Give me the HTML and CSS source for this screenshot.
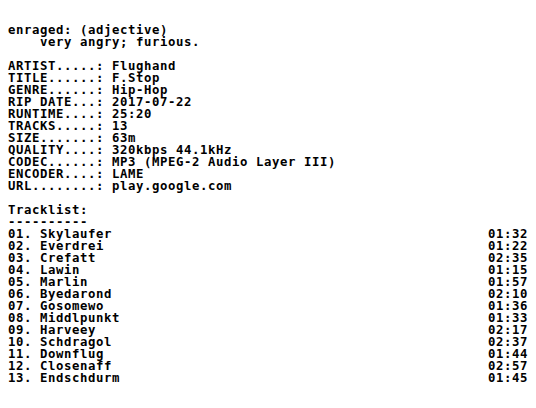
FILE: index.html
```html
<!DOCTYPE html>
<html>
<head>
<meta charset="utf-8">
<link rel="stylesheet" href="styles.css">
</head>
<body>
<pre class="nfo">enraged: (adjective)
    very angry; furious.

ARTIST.....: Flughand
TITLE......: F.Stop
GENRE......: Hip-Hop
RIP DATE...: 2017-07-22
RUNTIME....: 25:20
TRACKS.....: 13
SIZE.......: 63m
QUALITY....: 320kbps 44.1kHz
CODEC......: MP3 (MPEG-2 Audio Layer III)
ENCODER....: LAME
URL........: play.google.com

Tracklist:
----------
01. Skylaufer                                               01:32
02. Everdrei                                                01:22
03. Crefatt                                                 02:35
04. Lawin                                                   01:15
05. Marlin                                                  01:57
06. Byedarond                                               02:10
07. Gosomewo                                                01:36
08. Middlpunkt                                              01:33
09. Harveey                                                 02:17
10. Schdragol                                               02:37
11. Downflug                                                01:44
12. Closenaff                                               02:57
13. Endschdurm                                              01:45</pre>
</body>
</html>
```
FILE: styles.css
```css
html, body {
  margin: 0;
  padding: 0;
  background: #ffffff;
}
.nfo {
  margin: 0;
  padding: 24px 8px;
  font-family: "DejaVu Sans Mono", "Liberation Mono", monospace;
  font-weight: bold;
  font-size: 12.3px;
  letter-spacing: 0.595px;
  line-height: 12px;
  color: #000000;
}
```
